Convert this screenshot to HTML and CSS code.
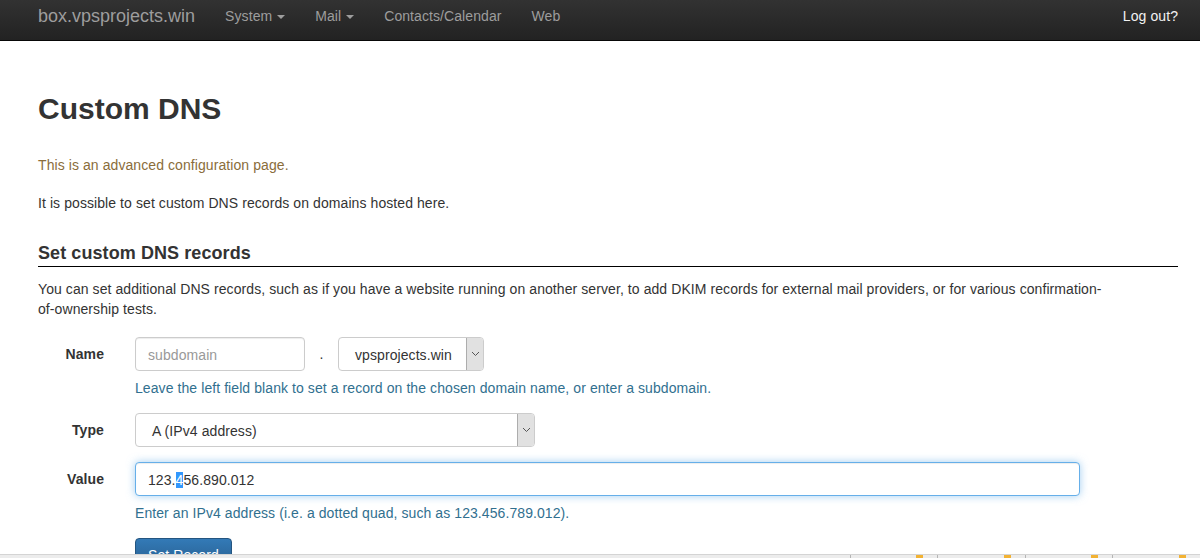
FILE: index.html
```html
<!DOCTYPE html>
<html lang="en">
<head>
  <meta charset="UTF-8">
  <title>Custom DNS</title>
  <link rel="stylesheet" href="styles.css">
</head>
<body>
<div class="page">
  <!-- Navbar -->
  <nav class="navbar">
    <div class="container nav-inner">
      <a class="brand" href="#">box.vpsprojects.win</a>
      <ul class="nav">
        <li><a href="#">System <span class="caret"></span></a></li>
        <li><a href="#">Mail <span class="caret"></span></a></li>
        <li><a href="#">Contacts/Calendar</a></li>
        <li><a href="#">Web</a></li>
      </ul>
      <ul class="nav nav-right">
        <li><a href="#" class="logout">Log out?</a></li>
      </ul>
    </div>
  </nav>

  <!-- Main -->
  <div class="container main">
    <h1>Custom DNS</h1>
    <p class="text-warning">This is an advanced configuration page.</p>
    <p class="lead-p">It is possible to set custom DNS records on domains hosted here.</p>

    <h3>Set custom DNS records</h3>
    <p class="intro">You can set additional DNS records, such as if you have a website running on another server, to add DKIM records for external mail providers, or for various confirmation-of-ownership tests.</p>

    <form class="dns-form">
      <div class="form-row">
        <label>Name</label>
        <div class="controls">
          <div class="inline">
            <div class="field name-field placeholder">subdomain</div>
            <span class="dot">.</span>
            <div class="select domain-select">
              <span class="select-text">vpsprojects.win</span>
              <span class="select-arrow"><svg width="9" height="6" viewBox="0 0 9 6"><path d="M1 1l3.5 3.5L8 1" fill="none" stroke="#555" stroke-width="1"/></svg></span>
            </div>
          </div>
          <div class="help">Leave the left field blank to set a record on the chosen domain name, or enter a subdomain.</div>
        </div>
      </div>

      <div class="form-row">
        <label>Type</label>
        <div class="controls">
          <div class="select type-select">
            <span class="select-text">A (IPv4 address)</span>
            <span class="select-arrow"><svg width="9" height="6" viewBox="0 0 9 6"><path d="M1 1l3.5 3.5L8 1" fill="none" stroke="#555" stroke-width="1"/></svg></span>
          </div>
        </div>
      </div>

      <div class="form-row">
        <label>Value</label>
        <div class="controls">
          <div class="field value-field focus">123.<span class="sel">4</span>56.890.012</div>
          <div class="help">Enter an IPv4 address (i.e. a dotted quad, such as 123.456.789.012).</div>
          <button type="button" class="btn-primary">Set Record</button>
        </div>
      </div>
    </form>
  </div>
</div>

  <!-- bottom strip -->
  <div class="strip">
    <span class="cell wide"></span>
    <span class="cell"><i></i></span>
    <span class="cell"><i></i></span>
    <span class="cell"><i></i></span>
    <span class="cell"><i></i></span>
  </div>
</body>
</html>
```

FILE: styles.css
```css
/* styles.css */

body {
  margin: 0;
  font-family: "Liberation Sans", Arial, sans-serif;
  font-size: 14px;
  line-height: 20px;
  letter-spacing: 0.08px;
  color: #333;
  background: #fff;
}

.page {
  height: 558px;
  overflow: hidden;
}

.container {
  width: 1140px;
  margin-left: 38px;
}

/* Navbar */
.navbar {
  height: 40px;
  background-image: linear-gradient(to bottom, #323232 0, #222 100%);
  border-bottom: 1px solid #080808;
}

.nav-inner {
  display: flex;
  align-items: center;
  height: 32px;
}

.brand {
  font-size: 18px;
  letter-spacing: 0;
  color: #9d9d9d;
  text-decoration: none;
  margin-right: 15px;
}

.nav {
  list-style: none;
  display: flex;
  margin: 0;
  padding: 0;
}

.nav li a {
  display: block;
  padding: 0 15px;
  color: #9d9d9d;
  text-decoration: none;
}

.nav-right {
  margin-left: auto;
}

.nav-right li a {
  padding-right: 0;
}

.nav .logout {
  color: #f2f2f2;
}

.caret {
  display: inline-block;
  width: 0;
  height: 0;
  margin-left: 1px;
  vertical-align: middle;
  border-top: 4px solid;
  border-left: 4px solid transparent;
  border-right: 4px solid transparent;
}

/* Main */
h1 {
  font-size: 30px;
  line-height: 33px;
  font-weight: bold;
  letter-spacing: 0;
  margin: 51px 0 0;
}

p {
  margin: 0;
}

.text-warning {
  color: #8a6d3b;
  margin-top: 30px;
}

.lead-p {
  margin-top: 18px;
}

h3 {
  font-size: 18px;
  line-height: 20px;
  font-weight: bold;
  margin: 30px 0 0;
  padding-bottom: 3px;
  border-bottom: 1px solid #000;
}

.intro {
  margin-top: 12px;
  max-width: 1074px;
}

/* Form */
.dns-form {
  margin-top: 18px;
}

.form-row {
  display: grid;
  grid-template-columns: 66px 1fr;
  column-gap: 31px;
  margin-bottom: 15px;
}

.form-row label {
  text-align: right;
  font-weight: bold;
  padding-top: 7px;
}

.inline {
  display: flex;
  align-items: center;
}

.field {
  box-sizing: border-box;
  height: 34px;
  padding: 7px 12px;
  border: 1px solid #ccc;
  border-radius: 4px;
  box-shadow: inset 0 1px 1px rgba(0, 0, 0, 0.075);
  background: #fff;
}

.placeholder {
  color: #999;
}

.name-field {
  width: 170px;
}

.dot {
  width: 33px;
  text-align: center;
}

.select {
  box-sizing: border-box;
  height: 34px;
  display: flex;
  border: 1px solid #ccc;
  border-radius: 4px;
  background: #fff;
  overflow: hidden;
}

.select-text {
  flex: 1;
  padding: 7px 0 0 16px;
}

.select-arrow {
  width: 16px;
  display: flex;
  align-items: center;
  justify-content: center;
  background: #e1e1e1;
  border-left: 1px solid #adadad;
}

.domain-select {
  width: 146px;
}

.type-select {
  width: 400px;
}

.value-field {
  width: 945px;
}

.value-field.focus {
  border-color: #66afe9;
  box-shadow: inset 0 1px 1px rgba(0, 0, 0, 0.075), 0 0 8px rgba(102, 175, 233, 0.6);
}

.sel {
  background: #3297fd;
  color: #fff;
}

.help {
  color: #31708f;
  margin: 7px 0 0;
}

.btn-primary {
  margin-top: 15px;
  height: 34px;
  padding: 6px 12px;
  font-family: inherit;
  font-size: 14px;
  letter-spacing: 0.08px;
  color: #fff;
  background-image: linear-gradient(to bottom, #337ab7 0, #265a88 100%);
  border: 1px solid #245580;
  border-radius: 4px;
}

/* bottom strip, sits over the page edge */
.strip {
  position: fixed;
  left: 0;
  right: 0;
  bottom: 0;
  height: 3px;
  display: flex;
  background: #ececec;
  border-top: 1px solid #d4d4d4;
}

.strip .cell {
  position: relative;
  width: 87px;
  border-left: 1px solid #b5b5b5;
}

.strip .cell.wide {
  width: 854px;
  border-left: none;
}

.strip .cell i {
  position: absolute;
  right: 14px;
  top: 0;
  width: 7px;
  height: 3px;
  background: #f2b233;
}
```
